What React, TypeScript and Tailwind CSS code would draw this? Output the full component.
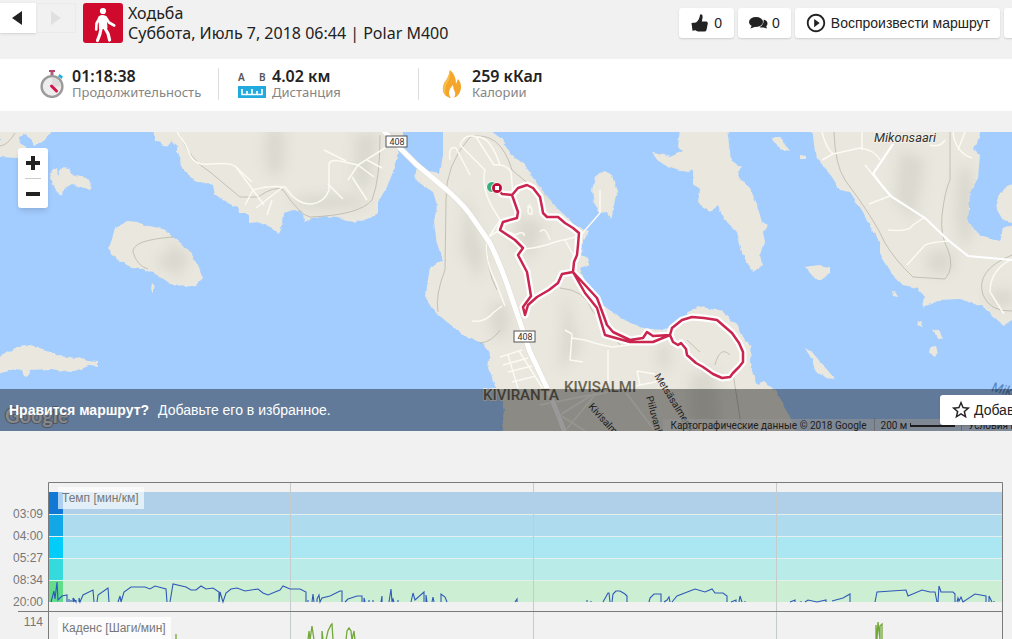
import React, { useState } from 'react';
import { MdPlayCircleOutline, MdStarBorder } from 'react-icons/md';

interface PaceZone {
  label: string;
  y: number;
  color: string;
  tint: string;
}

const PACE_ZONES: PaceZone[] = [
  { label: '03:09', y: 492, color: '#1278d6', tint: '#b0d0ea' },
  { label: '04:00', y: 514, color: '#12a8e8', tint: '#aedcee' },
  { label: '05:27', y: 536, color: '#02cdfa', tint: '#abe7f3' },
  { label: '08:34', y: 558, color: '#35dadd', tint: '#b9ebe9' },
  { label: '20:00', y: 580, color: '#63dc8c', tint: '#ccefd3' }
];

const PACE_LINE =
  'M51 602L54 591L55 599L57 582L58 600L62 596L67 595V602 M69 602V599 M71 602V600 M73 602V598L74 602V599L76 602V600 M79 602V598L80 602L83 595L93 590L94 602 M97 602L98 595L108 588L109 602' +
  ' M118 602L120 596L121 602L124 592L131 587H145L150 589L155 586L166 589L167 602 M170 602L173 584L186 587L191 590H196L201 586L206 589L213 588L219 592V602L220 592L223 602L226 593L231 589L237 588L245 591L258 589L263 593L268 595L275 592L280 590L283 586L290 589H300L306 592V602' +
  ' M308 602V600 M312 602L313 594L314 602 M317 602V599L319 595L320 602L322 598L330 596L340 591H342V602 M345 602L348 599L357 596H362V602 M364 602V598L365 602 M369 602V600 M373 602V600 M381 602L382 596V602 M389 602L391 589L392 602L393 599L394 602 M398 602V600' +
  ' M411 602L413 593L415 600L424 592V602 M426 602V595L427 602 M432 602L433 597L434 602 M441 602V594L445 597L447 602 M515 602L517 599V602 M587 602V600 M591 602V601 M603 602L608 593H609L610 602 M612 602L613 594L616 591H620L625 594L627 596V602' +
  ' M649 602L650 598L654 594H661V602 M664 602L667 600L669 597L670 602 M672 602L677 596L695 589L705 592L712 589L715 593H723L727 596V602 M731 602L736 600V602 M739 602L740 596L742 602 M745 602V601' +
  ' M790 602L795 600V602 M801 602V601 M805 602L808 600L817 602L826 600V602 M832 601L843 598L850 594V602 M875 602L877 592L906 590L908 596L922 590L930 592H935L937 602 M938 602L939 586L941 592H953L955 594V602 M957 602L958 598L959 601L961 597L963 602L975 594L986 596V602 M989 602V596L992 602 M994 602V601';

const CADENCE_LINE =
  'M308 640L309 631L310 640L312 626L314 640 M322 640V631L323 640 M326 640L328 631L331 625L332 624L333 640 M346 640L347 631L349 628L351 631L352 640L354 631L355 640 M176 640V634 M876 640V625L877 640L878 622L880 640V626L882 624V640';

const LAND = [
  // northern peninsula
  'M153 128L155 140L167 147L172 141L177 145L177 152L181 159L182 168L190 177L200 182L213 185L215 195L227 202L237 207L239 213L249 213L249 223L260 222L272 228L278 234L283 223L284 213L293 210L303 213L304 222L317 217L337 218L352 222L367 220L378 213L378 202L387 187L393 172L398 152L403 138L403 128Z',
  // main land with the route
  'M443 128L443 155L440 173L428 171L417 164L415 180L433 192L437 205L434 222L437 245L443 260L430 268L427 285L426 298L435 312L447 322L467 338L483 343L490 355L488 368L495 385L502 395L505 412L502 425L505 436H797L790 417L783 405L777 392L765 382L758 385L752 372L750 345L745 340L737 325L723 312L707 308L697 306L683 317L663 330L643 328L620 318L603 305L585 282L580 268L590 264L588 258L582 255L583 242L589 232L573 223L557 208L538 185L525 165L512 155L503 140L487 128Z',
  // middle island chain
  'M680 128L678 147L683 151L670 157L652 151L655 158L667 167L683 172L693 170L693 183L700 190L698 202L710 213L718 205L723 218L737 232L742 252L750 268L753 272L763 265L760 258L765 242L763 232L768 225L762 222L757 205L750 188L740 178L737 172L742 168L731 160L727 128Z',
  // eastern land
  'M812 128L815 152L820 162L832 177L840 190L850 192L863 212L873 232L880 242L880 255L890 272L903 285L917 288L925 297L923 308L940 300L960 299L983 307L1003 325L1016 318V223L1003 228L1000 241L980 235L968 222L970 193L978 178L980 155L973 148L980 138L982 128Z',
  'M1016 182L1003 188L996 200L997 210L1003 220L1016 223Z',
  'M0 128H52L45 140L34 147L31 139L25 135L19 137L20 143L28 149L18 158L0 157Z',
  'M50 178L52 170L57 168L58 176L61 168L68 169L75 176L88 178L92 187L90 190L72 184L63 189L62 196L57 192Z',
  'M128 221L115 228L113 235L109 247L112 253L117 260L133 268L143 269L157 275L170 283L185 287L195 286L203 278L197 262L187 248L173 237L163 229L145 225L137 222Z',
  'M-4 359L8 352L20 346L30 344L40 348L60 356L78 358L88 361L98 362V366L90 365L72 372L50 369L30 370L27 377L24 376L22 370L15 369L-4 375Z',
  'M603 170L595 177L592 190L594 204L600 213L607 212L610 220L614 205L617 192L612 175Z',
  'M772 138L777 137L782 139L789 152L780 149Z',
  'M806 267L818 265L830 267L830 273L820 281L813 277Z',
  'M805 348L812 352L823 365L835 379L825 378L815 370L812 360Z',
  'M152 283L154 285L154 293L151 290Z',
  'M933 329L939 331L943 339L937 338Z',
  'M930 348L936 347L938 352L935 357L929 353Z',
  'M800 155L806 156L806 160L800 159Z',
  'M892 291L896 292L898 297L893 296Z',
  'M918 320L922 322L923 327L917 325Z'
];

const MINOR_ROADS = [
  'M177 132Q187 145 190 155Q195 166 210 164Q232 162 236 167L253 190Q268 185 285 187Q297 205 312 204Q325 202 329 190V165Q329 159 340 161L358 165L385 148L397 140',
  'M253 190L245 205 M253 190L264 205M236 167L252 182 M283 187L256 208 M272 200L267 215 M324 150L346 161 M358 165L348 180 M358 165L374 177 M367 160L382 168 M352 177L367 200 M328 184L343 199',
  'M460 145Q465 133 476 137L494 165Q505 163 511 172L513 195 M460 145L485 170Q480 190 497 215L500 220L487 240 M476 137Q490 135 500 165 M450 160Q448 145 456 148L470 175',
  'M487 240Q498 225 515 235Q525 230 524 236 M523 249Q540 248 555 242L580 236 M540 232Q545 225 550 240 M565 240L575 258 M530 204Q525 215 532 214Q533 205 527 207',
  'M600 213L580 236 M600 190V213',
  'M472 321Q485 323 494 312L502 306 M487 240Q485 262 495 280L505 306',
  'M500 357L522 350 M503 365L528 358 M508 372L532 366 M512 382L536 376 M508 355L520 395 M519 351L545 392',
  'M565 330L572 334L570 360L583 362 M572 338L585 340Q600 345 612 347L630 345 M608 350V385L560 415 M565 431L595 395L640 385L665 380 M640 385L637 371L655 374 M620 385L655 431 M560 415L585 431 M540 405L590 395',
  'M822 132Q826 148 833 154L860 148Q875 150 880 160 M862 132L862 150 M833 154L822 160 M930 145Q940 148 945 140 M953 132Q955 152 972 158 M865 165L873 175 M869 204L890 196 M888 230Q910 232 913 225L925 217 M907 265L925 245Q932 242 948 241 M1012 259Q990 270 990 292L1004 314 M965 132L958 150'
];

const TRAILS =
  'M173 237Q132 240 133 252Q137 266 148 269 M180 135Q190 160 210 172L240 197H258Q275 185 283 190Q300 215 310 217Q360 215 372 200Q380 180 380 135 M470 137Q445 165 446 200L445 270Q435 295 438 312 M470 137Q500 130 512 170L530 185 M487 240Q486 270 497 290 M560 288Q585 290 592 310Q605 325 620 345 M687 340L700 352 M715 365Q720 345 730 355 M733 373L742 431 M834 132Q835 165 845 180Q875 220 885 243Q895 260 913 277L945 279Q955 268 948 250Q940 235 942 215Q945 190 950 180L950 132 M1012 255Q975 270 983 295Q990 312 1012 311 M480 343Q492 342 500 330 M0 146Q8 145 15 133';

const HIGHWAY = 'M383 130L400 148L417 165L447 190Q466 207 474 220L490 243Q500 264 507 284L520 322L530 352L547 388L557 412L565 433';

const ROUTE =
  'M497 188L502 194L512 195L518 188L527 185L533 188L540 197L542 207L543 213L547 217H558L565 223L573 228L579 233L578 245L577 255L574 262L573 272L585 285L597 298L603 314L607 325L613 332L630 340L643 338L647 332L653 336L670 335L672 328L682 320L692 317L704 318L717 320L732 333L739 343L743 352V362L739 367L733 373L730 377L722 378L713 374L703 367L696 363L687 355L686 349L681 343L678 345L673 342L670 335L653 342H630L605 335L597 308L585 293L573 272L562 274L558 283L549 290L537 297L528 305L525 315L523 307L531 296L527 272L518 255L523 248L515 240L500 230L503 222L517 218L518 212L512 195';

function WalkIcon() {
  return (
    <svg className="size-10" viewBox="0 0 40 40" fill="none" stroke="#fff" strokeLinecap="round" strokeLinejoin="round" aria-hidden="true">
      <circle cx="20" cy="8" r="3.1" fill="#fff" stroke="none" />
      <path d="M16.500 14Q19 12.200 22.500 13.800L23.500 24.500L17 25.500Z" fill="#fff" strokeWidth="2" />
      <path d="M22.800 14.500L26 19.500L31.200 22.500" strokeWidth="2.6" />
      <path d="M16.800 14.500L13.500 20.500L13.200 26.500" strokeWidth="2.6" />
      <path d="M18.200 25L16.800 31.500L14.500 37.500" strokeWidth="3.2" />
      <path d="M21.800 25L25 30.500L26.600 37" strokeWidth="3.2" />
    </svg>
  );
}

function StopwatchIcon() {
  return (
    <svg className="h-7 w-6" viewBox="0 0 24 28" fill="none" aria-hidden="true">
      <path d="M9 0H15V2H9Z" fill="#b8456a" />
      <rect x="10.5" y="2" width="3" height="4" fill="#a8627a" />
      <path d="M19.500 4L23 6.500L21.500 9L18 6.500Z" fill="#2ab0dc" />
      <circle cx="12" cy="16.5" r="10.4" fill="#ededed" stroke="#9b9b9b" strokeWidth="2.4" />
      <path d="M12 7.500V16.500H21A9 9 0 0 0 12 7.500Z" fill="#dcdcdc" />
      <path d="M11.500 16L16.500 21" stroke="#d5144c" strokeWidth="3" strokeLinecap="round" />
    </svg>
  );
}

function DistanceIcon() {
  return (
    <svg className="h-7 w-7" viewBox="0 0 28 28" aria-hidden="true">
      <g fill="#555" fontFamily="'Noto Sans', sans-serif" fontSize="10" fontWeight="600">
        <text x="0" y="11">A</text>
        <text x="21" y="11">B</text>
      </g>
      <rect y="16" width="28" height="12" fill="#22a9de" />
      <path d="M4 19V24.500H24V19M9 21V24M14 19V24M19 21V24" fill="none" stroke="#fff" strokeWidth="1.6" />
    </svg>
  );
}

function FlameIcon() {
  return (
    <svg className="h-7 w-5" viewBox="0 0 20 28" aria-hidden="true">
      <path d="M8 0Q7 5 5 9Q2 12 1 17Q0 22 4 26L8 28L14 27Q19 23 19 17Q19 12 16 9L14 14Q14 5 8 0Z" fill="#f4a52a" />
      <path d="M8 0Q9 7 6 12Q2 17 4 26Q0 22 1 17Q2 12 5 9Q7 5 8 0Z" fill="#f7bd4b" />
      <path d="M11 15Q7 19 7 23Q7 26 9 28H11Q14 26 13 22Q11 19 11 15Z" fill="#fff" />
    </svg>
  );
}

function ThumbIcon() {
  return (
    <svg className="h-[18px] w-[17px]" viewBox="0 0 17 18" fill="#222" aria-hidden="true">
      <path d="M0.500 9L5 8.500Q8.500 5.500 9 1Q9.200 0 10.200 0.200Q12 0.600 11.600 3.500L10.800 7.500H15.500Q17 7.800 16.800 9.500L15.500 16Q15 17.500 13.500 17.500H7Q5.500 17.300 4.500 16.300L1.500 16.800Z" />
    </svg>
  );
}

function CommentsIcon() {
  return (
    <svg className="h-3 w-[19px]" viewBox="0 0 19 12" fill="#222" aria-hidden="true">
      <ellipse cx="7" cy="5" rx="7" ry="5" />
      <path d="M3 8L1.500 11.500L7 9.500Z" />
      <path d="M14.800 2.500Q18.500 3.500 18.500 6.500Q18.500 8.200 17.200 9.200L18 11.500L14.500 10.500Q12 10.800 10.500 10Q14.800 8.500 14.800 2.500Z" />
    </svg>
  );
}

interface StatProps {
  icon: React.ReactNode;
  value: string;
  label: string;
}

function Stat({ icon, value, label }: StatProps) {
  return (
    <div className="flex w-[200px] items-center gap-[6px] border-r border-[#dcdcdc] pl-[19px] last:border-0">
      <div className="flex w-7 justify-center">{icon}</div>
      <div>
        <div className="text-base leading-4 font-semibold text-[#222]">{value}</div>
        <div className="text-[13px] leading-4 text-[#858585]">{label}</div>
      </div>
    </div>
  );
}

function RoadSign({ x, y }: { x: number; y: number }) {
  return (
    <g>
      <rect x={x} y={y} width="21" height="11" fill="#fff" stroke="#555" />
      <text x={x + 11} y={y + 9} textAnchor="middle" fontSize="9" fill="#333">408</text>
    </g>
  );
}

function RouteMap() {
  return (
    <svg className="h-[299px] w-full" viewBox="0 132 1012 299" preserveAspectRatio="xMinYMin slice" fontFamily="Roboto, sans-serif" role="img" aria-label="Карта маршрута">
      <defs>
        <filter id="coast">
          <feTurbulence type="fractalNoise" baseFrequency="0.14" numOctaves="2" seed="4" />
          <feDisplacementMap in="SourceGraphic" scale="4" xChannelSelector="R" yChannelSelector="G" />
        </filter>
        <filter id="relief" x="-50%" y="-50%" width="200%" height="200%">
          <feGaussianBlur stdDeviation="6" />
        </filter>
        <clipPath id="land">
          {LAND.slice(0, 8).map((d) => <path key={d} d={d} />)}
        </clipPath>
      </defs>
      <rect y="132" width="1012" height="299" fill="#a3ccff" />
      <g fill="#e9e7de" filter="url(#coast)">
        {LAND.map((d) => <path key={d} d={d} />)}
      </g>
      <g clipPath="url(#land)">
        <g fill="#cfcdc3" opacity="0.55" filter="url(#relief)">
          <path d="M155 262L170 250L172 240L190 258L178 277Z" />
          <path d="M355 135L378 132L370 185L355 190Z" />
          <ellipse cx="330" cy="202" rx="38" ry="7" />
          <ellipse cx="275" cy="150" rx="10" ry="26" />
          <path d="M465 195L485 255L478 280L462 250Z" />
          <path d="M520 215L545 225L530 260L515 240Z" />
          <path d="M540 150L555 210L540 200Z" />
          <path d="M565 290L580 350L560 370Z" />
          <ellipse cx="664" cy="357" rx="6" ry="14" />
          <path d="M690 375L715 370L720 430L690 420Z" />
          <ellipse cx="500" cy="320" rx="10" ry="18" />
          <path d="M900 150L925 160L915 220L895 200Z" />
          <ellipse cx="965" cy="205" rx="9" ry="40" />
          <ellipse cx="1002" cy="298" rx="14" ry="9" />
          <ellipse cx="940" cy="262" rx="14" ry="12" />
        </g>
      </g>
      <path d={TRAILS} fill="none" stroke="#bab7a8" strokeWidth="0.8" />
      <g fill="none" stroke="#fbfaf3" strokeWidth="1.5" strokeLinejoin="round">
        {MINOR_ROADS.map((d) => <path key={d} d={d} />)}
      </g>
      <path d="M893 144L873 174Q885 190 892 197L925 218L948 240L968 256L1012 260" fill="none" stroke="#fff" strokeWidth="2.2" />
      <path d={HIGHWAY} fill="none" stroke="#dedbd0" strokeWidth="6" />
      <path d={HIGHWAY} fill="none" stroke="#fff" strokeWidth="5" />
      <path d={ROUTE} fill="none" stroke="#fff" strokeWidth="7" strokeLinejoin="round" />
      <path d={ROUTE} fill="none" stroke="#c9254f" strokeWidth="2.5" strokeLinejoin="round" />
      <circle cx="492" cy="187" r="5.5" fill="#39ae7c" stroke="#fff" />
      <circle cx="497" cy="188" r="5.5" fill="#bd0f38" stroke="#fff" />
      <rect x="495" y="186" width="4" height="4" fill="#fff" />
      <RoadSign x={386} y={136} />
      <RoadSign x={514} y={331} />
      <g fill="#6b6655" stroke="#e9e7de" strokeWidth="2" paintOrder="stroke" fontWeight="500">
        <text x="564" y="392" fontSize="15">KIVISALMI</text>
        <text x="483" y="400" fontSize="15">KIVIRANTA</text>
        <g fontSize="10" fontWeight="400" fill="#333">
          <text transform="translate(654 376) rotate(58)">Metsäsalmentie</text>
          <text transform="translate(646 397) rotate(75)">Piiluvankatu</text>
          <text transform="translate(588 407) rotate(48)">Kivisalmentie</text>
        </g>
      </g>
      <text x="874" y="142" fontSize="13" fontStyle="italic" fill="#333" stroke="#f1f0ea" strokeWidth="2" paintOrder="stroke">Mikonsaari</text>
      <text transform="translate(991 391) rotate(14)" fontSize="13" fontStyle="italic" fill="#5582bd">Mikonselkä</text>
      <text x="5" y="423" fontSize="20" fontFamily="Lato, sans-serif" fontWeight="700" fill="#dfe1e6" stroke="#7f8ea6" strokeWidth="2" paintOrder="stroke">Google</text>
    </svg>
  );
}

function TrainingChart() {
  return (
    <svg className="w-full" viewBox="0 482 1012 158" preserveAspectRatio="xMinYMin slice" fontFamily="'Liberation Sans', sans-serif" fontSize="12" fill="#777" role="img" aria-label="Темп и каденс">
      {PACE_ZONES.map((zone) => (
        <g key={zone.label}>
          <rect x="49" y={zone.y} width="953" height="22" fill={zone.tint} />
          <rect x="49" y={zone.y} width="14" height="22" fill={zone.color} />
          <text x="43" y={zone.y + 26} textAnchor="end">{zone.label}</text>
        </g>
      ))}
      {PACE_ZONES.slice(1).map((zone) => (
        <rect key={zone.label} x="49" y={zone.y} width="953" height="1" fill="#e4f0ee" />
      ))}
      <g fill="#c6cccc">
        <rect x="290" y="483" width="1" height="157" />
        <rect x="533" y="483" width="1" height="157" />
        <rect x="776" y="483" width="1" height="157" />
      </g>
      <path d={PACE_LINE} fill="none" stroke="#3058b8" strokeWidth="1.1" />
      <path d={CADENCE_LINE} fill="none" stroke="#74a838" strokeWidth="1.3" />
      <path d="M48.500 640V482.500H1002.500V640M18 611.500H1002" fill="none" stroke="#7b7b7b" />
      <text x="43" y="626" textAnchor="end">114</text>
      <rect x="58" y="487" width="86" height="22" fill="#fff" fillOpacity="0.65" />
      <text x="62" y="502">Темп [мин/км]</text>
      <rect x="58" y="617" width="113" height="23" fill="#fff" fillOpacity="0.8" />
      <text x="62" y="632">Каденс [Шаги/мин]</text>
    </svg>
  );
}

const BUTTON = 'flex h-[30px] shrink-0 items-center rounded-[3px] bg-white text-sm whitespace-nowrap text-[#222] shadow-[0_1px_2px_rgba(0,0,0,0.15)]';

function App() {
  const [likes, setLikes] = useState(0);

  return (
    <div className="h-screen overflow-hidden bg-[#f1f1f1] font-['Liberation_Sans',sans-serif] text-[#222]">
      {/* Header */}
      <header className="flex h-[59px] items-start justify-between pt-[3px]">
        <div className="flex items-start font-['Noto_Sans',sans-serif]">
          <button aria-label="Назад" className="flex h-[30px] w-9 items-center justify-center bg-white shadow-sm">
            <svg className="size-4" viewBox="0 0 16 16" aria-hidden="true"><path d="M2 8L12 1V15Z" fill="#222" /></svg>
          </button>
          <button aria-label="Вперёд" disabled className="flex h-[30px] w-10 items-center justify-center border border-[#eaeaea]">
            <svg className="size-4" viewBox="0 0 16 16" aria-hidden="true"><path d="M13 8L3 1V15Z" fill="#e0e0e0" /></svg>
          </button>
          <div className="ml-[7px] size-10 rounded-[3px] bg-[#cf0a2c]">
            <WalkIcon />
          </div>
          <h1 className="ml-[5px] text-base leading-5 font-normal whitespace-nowrap">
            Ходьба
            <br />
            Суббота, Июль 7, 2018 06:44 | Polar M400
          </h1>
        </div>
        <div className="-mr-7 flex gap-1 pt-[5px]">
          <button className={`${BUTTON} gap-[6px] px-3`} onClick={() => setLikes(likes + 1)}>
            <ThumbIcon />
            {likes}
          </button>
          <button className={`${BUTTON} gap-1 px-[11px]`}>
            <CommentsIcon />
            0
          </button>
          <button className={`${BUTTON} gap-1 px-[10px]`}>
            <MdPlayCircleOutline className="size-[22px]" />
            Воспроизвести маршрут
          </button>
          <button aria-label="Меню" className={`${BUTTON} w-9`} />
        </div>
      </header>

      {/* Summary */}
      <section className="bg-white pt-[9px] pb-[11px] pl-[19px] font-['Noto_Sans',sans-serif]">
        <div className="flex h-8">
          <Stat icon={<StopwatchIcon />} value="01:18:38" label="Продолжительность" />
          <Stat icon={<DistanceIcon />} value="4.02 км" label="Дистанция" />
          <Stat icon={<FlameIcon />} value="259 кКал" label="Калории" />
        </div>
      </section>

      {/* Map */}
      <section className="relative mt-[21px] flex overflow-hidden">
        <RouteMap />
        <div className="absolute top-4 left-[18px] flex w-[30px] flex-col items-center rounded-[3px] bg-white shadow-md">
          <button aria-label="Увеличить" className="flex h-[30px] w-full items-center justify-center">
            <svg className="size-[14px]" viewBox="0 0 14 14" aria-hidden="true"><path d="M5 0H9V5H14V9H9V14H5V9H0V5H5Z" fill="#222" /></svg>
          </button>
          <div className="h-px w-4 bg-[#ccc]" />
          <button aria-label="Уменьшить" className="flex h-[29px] w-full items-center justify-center">
            <svg className="size-[14px]" viewBox="0 0 14 14" aria-hidden="true"><path d="M0 5H14V9H0Z" fill="#222" /></svg>
          </button>
        </div>
        <div className="absolute right-0 bottom-0 -mr-[77px] flex h-3 items-center bg-[#f5f5f5]/60 font-[Roboto,sans-serif] text-[10px] whitespace-nowrap text-[#333]">
          <span className="px-[7px]">Картографические данные © 2018 Google</span>
          <span className="flex items-center gap-[3px] border-l border-[#999]/60 px-[6px]">
            200 м
            <span className="h-1 w-[45px] border-x border-b-2 border-[#333]" />
          </span>
          <a href="#terms" className="border-l border-[#999]/60 px-[6px]">Условия использования</a>
        </div>
        <div className="absolute inset-x-0 bottom-0 flex h-[42px] items-center justify-between bg-black/40 pl-[9px] text-sm text-white">
          <p className="flex gap-[9px]">
            <strong>Нравится маршрут?</strong>
            <span>Добавьте его в избранное.</span>
          </p>
          <button className={`${BUTTON} -mr-32 w-[200px] gap-[2px] pl-[10px]`}>
            <MdStarBorder className="size-[22px]" />
            Добавить в избранное
          </button>
        </div>
      </section>

      {/* Charts */}
      <section className="mt-[51px]">
        <TrainingChart />
      </section>
    </div>
  );
}

export default App;
